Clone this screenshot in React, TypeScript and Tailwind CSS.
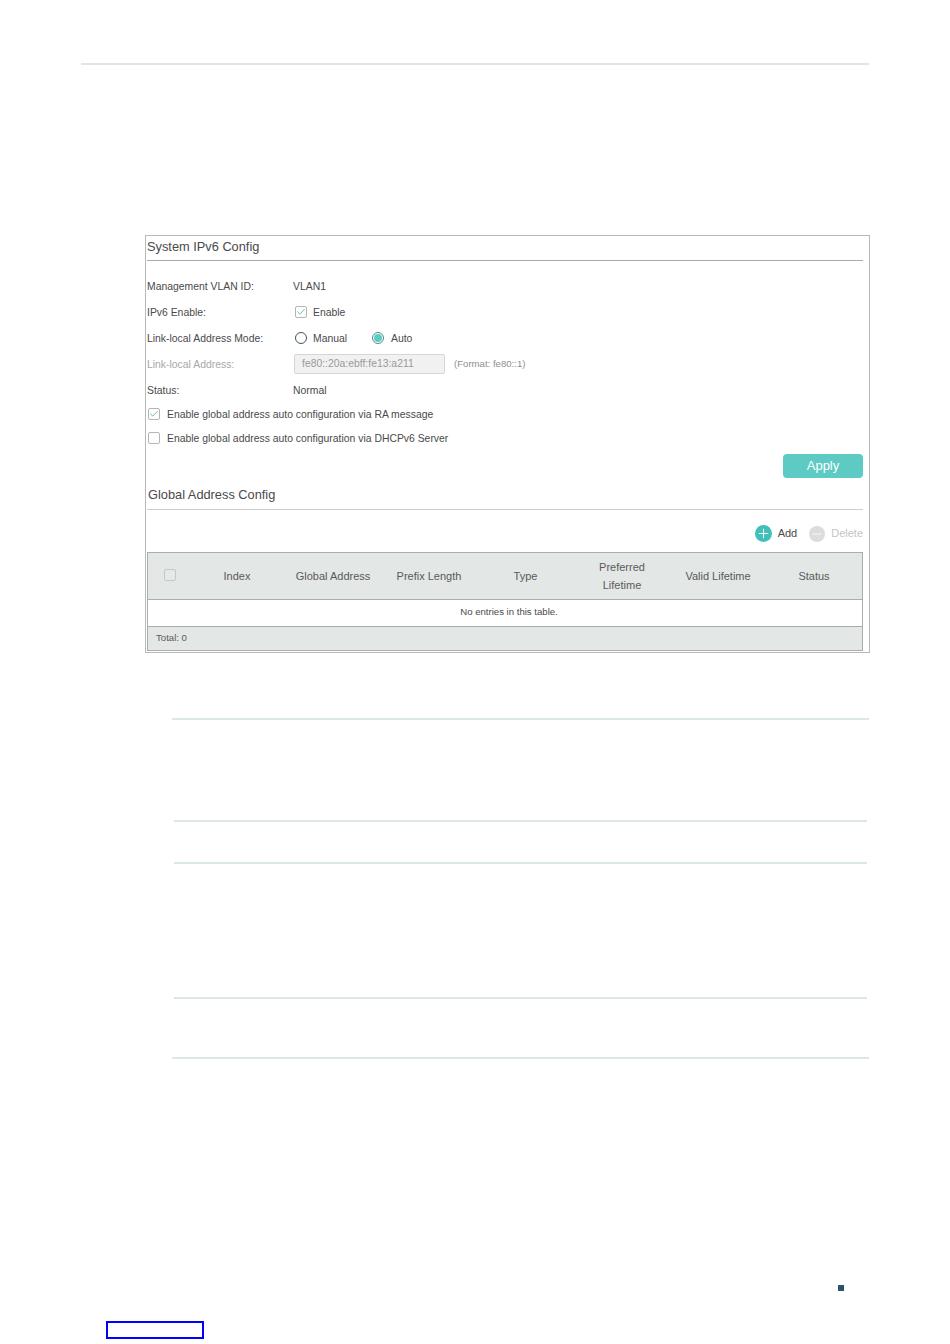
import { Check, Plus, Minus } from 'lucide-react';

const columns = ['Index', 'Global Address', 'Prefix Length', 'Type', 'Preferred Lifetime', 'Valid Lifetime', 'Status'];

function Box({ checked, light }: { checked?: boolean; light?: boolean }) {
  return (
    <span
      className={`mb-[2px] flex h-[12px] w-[12px] shrink-0 items-center justify-center rounded-[2px] border ${
        light ? 'border-[#c4c8c8] bg-[#e6e9e8]' : 'border-[#b5b5b5] bg-white'
      }`}
    >
      {checked && <Check size={10} strokeWidth={1.75} className="text-[#3a9f99]" />}
    </span>
  );
}

function Radio({ checked }: { checked?: boolean }) {
  return (
    <span
      className={`mb-[2px] flex h-[12px] w-[12px] shrink-0 items-center justify-center rounded-full border ${
        checked ? 'border-[#4a8f8c]' : 'border-[#3f5560]'
      }`}
    >
      {checked && <span className="h-[8px] w-[8px] rounded-full bg-[#5ecac4]" />}
    </span>
  );
}

function Row({ label, muted, height, children }: { label: string; muted?: boolean; height: string; children: React.ReactNode }) {
  return (
    <div className={`flex items-center ${height}`}>
      <span className={`w-[146px] shrink-0 ${muted ? 'text-[#a8a8a8]' : 'text-[#4a4a4a]'}`}>{label}</span>
      {children}
    </div>
  );
}

function Rule({ className }: { className: string }) {
  return <div className={`h-[2px] bg-[#dde7e9] ${className}`} />;
}

export default function App() {
  return (
    <div className="h-[1344px] w-[950px] overflow-hidden bg-white font-['Liberation_Sans',Arial,sans-serif] text-[10.4px] leading-none">
      <Rule className="ml-[81px] mt-[63px] w-[788px]" />

      {/* screenshot panel */}
      <div className="ml-[145px] mt-[170px] h-[418px] w-[725px] border border-[#b9b9b9] pl-[1px] pr-[6px] text-[#4a4a4a]">
        <div className="flex h-[25px] items-center border-b border-[#a9a9a9] pb-[2px] text-[12.8px] text-[#4a4a4a]">
          System IPv6 Config
        </div>

        <div className="pt-[13px]">
          <Row label="Management VLAN ID:" height="h-[26px]">
            <span>VLAN1</span>
          </Row>
          <Row label="IPv6 Enable:" height="h-[26px]">
            <span className="ml-[2px] flex items-center gap-[6px]">
              <Box checked />
              <span>Enable</span>
            </span>
          </Row>
          <Row label="Link-local Address Mode:" height="h-[26px]">
            <span className="ml-[2px] flex items-center">
              <Radio />
              <span className="ml-[6px] w-[59px]">Manual</span>
              <Radio checked />
              <span className="ml-[7px]">Auto</span>
            </span>
          </Row>
          <Row label="Link-local Address:" muted height="h-[26px]">
            <span className="mb-[2px] ml-[1px] flex h-[20px] w-[151px] items-center rounded-[2px] border border-[#d6d6d6] bg-[#f1f1f1] pl-[7px] text-[#9a9a9a]">
              fe80::20a:ebff:fe13:a211
            </span>
            <span className="mb-[2px] ml-[9px] text-[9.6px] text-[#8f8f8f]">(Format: fe80::1)</span>
          </Row>
          <Row label="Status:" height="h-[26px]">
            <span>Normal</span>
          </Row>
          <div className="-mt-[1px] flex h-[24px] items-center gap-[7px] pl-[1px]">
            <Box checked />
            <span>Enable global address auto configuration via RA message</span>
          </div>
          <div className="flex h-[24px] items-center gap-[7px] pl-[1px]">
            <Box />
            <span>Enable global address auto configuration via DHCPv6 Server</span>
          </div>
        </div>

        <div className="mt-[3px] flex justify-end">
          <button className="flex h-[24px] w-[80px] items-center justify-center rounded-[4px] bg-[#5ecac4] pb-[1px] text-[13px] text-white">
            Apply
          </button>
        </div>

        <div className="flex h-[32px] items-center border-b border-[#cfcfcf] pt-[3px] text-[12.8px] text-[#4a4a4a]">
          <span className="pl-[1px]">Global Address Config</span>
        </div>

        <div className="flex h-[42px] items-center justify-end pt-[5px]">
          <span className="flex h-[17px] w-[17px] items-center justify-center rounded-full bg-[#41bfb8]">
            <Plus size={15} strokeWidth={1.5} className="text-white" />
          </span>
          <span className="ml-[6px] text-[11px] text-[#4a4a4a]">Add</span>
          <span className="ml-[12px] flex h-[16px] w-[16px] items-center justify-center rounded-full bg-[#dcdcdc]">
            <Minus size={14} strokeWidth={1.5} className="text-white" />
          </span>
          <span className="ml-[6px] text-[11px] text-[#c4c4c4]">Delete</span>
        </div>

        <div className="h-[99px] border border-[#a9adad] text-[#5a5a5a]">
          <div className="grid h-[47px] grid-cols-[41px_96px_96px_96px_97px_96px_96px_96px] items-center border-b border-[#a9adad] bg-[#e3e7e6] text-center text-[11px] leading-[18px]">
            <span className="flex justify-center pl-[3px]">
              <Box light />
            </span>
            {columns.map((col) => (
              <span key={col} className={col === 'Preferred Lifetime' ? 'px-[20px]' : ''}>
                {col}
              </span>
            ))}
          </div>
          <div className="flex h-[27px] items-center justify-center border-b border-[#a9adad] pb-[2px] pl-[8px] text-[9.6px] text-[#4a4a4a]">
            No entries in this table.
          </div>
          <div className="flex h-[23px] items-center bg-[#e3e7e6] pl-[8px] pb-[1px] text-[9.6px] text-[#5a5a5a]">Total: 0</div>
        </div>
      </div>

      <Rule className="ml-[172px] mt-[65px] w-[697px]" />
      <Rule className="ml-[174px] mt-[100px] w-[693px]" />
      <Rule className="ml-[174px] mt-[40px] w-[693px]" />
      <Rule className="ml-[174px] mt-[133px] w-[693px]" />
      <Rule className="ml-[172px] mt-[58px] w-[697px]" />

      <div className="ml-[838px] mt-[226px] h-[6px] w-[6px] bg-[#2b5468]" />
      <div className="ml-[106px] mt-[30px] h-[18px] w-[98px] border-2 border-[#0000ff]" />
    </div>
  );
}
